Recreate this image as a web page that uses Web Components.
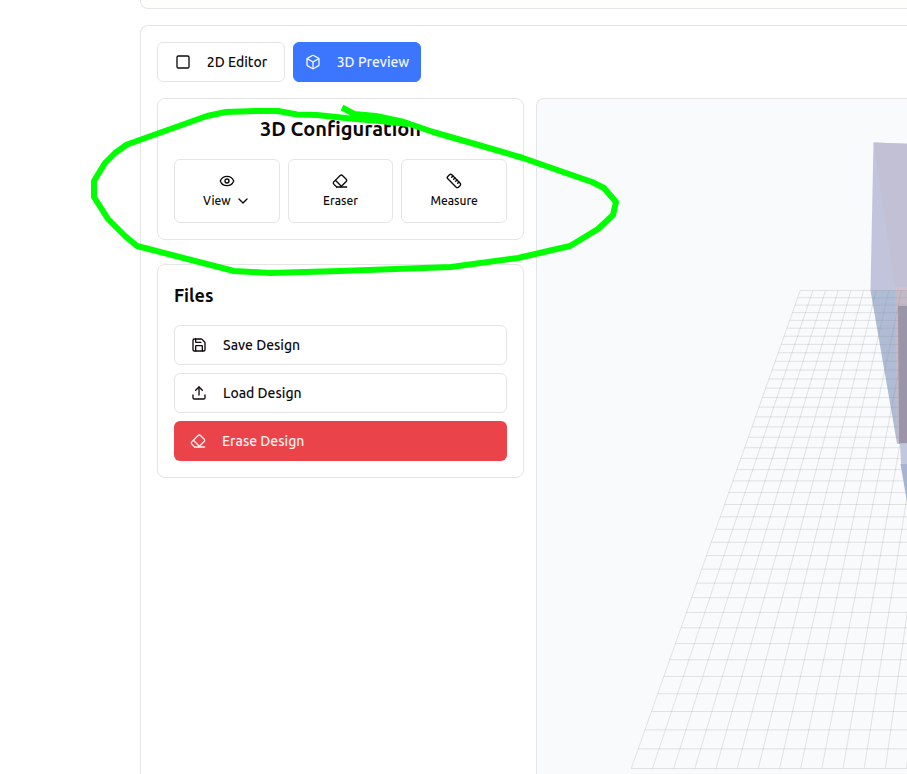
<!DOCTYPE html>
<html lang="en">
<head>
<meta charset="utf-8">
<meta name="viewport" content="width=device-width, initial-scale=1">
<title>Design editor</title>
<style>
  html, body { margin: 0; }
  body {
    background: #fff;
    color: #0c0a09;
    font-family: Ubuntu, "Noto Sans", sans-serif;
    font-size: 14px;
    line-height: 20px;
  }
</style>
</head>
<body>
<design-app></design-app>

<script>
const ICONS = {
  square: '<rect width="18" height="18" x="3" y="3" rx="2"/>',
  box: '<path d="M21 8a2 2 0 0 0-1-1.73l-7-4a2 2 0 0 0-2 0l-7 4A2 2 0 0 0 3 8v8a2 2 0 0 0 1 1.73l7 4a2 2 0 0 0 2 0l7-4A2 2 0 0 0 21 16Z"/><path d="m3.3 7 8.7 5 8.7-5"/><path d="M12 22V12"/>',
  eye: '<path d="M2.06 12.35a1 1 0 0 1 0-.7 10.75 10.75 0 0 1 19.88 0 1 1 0 0 1 0 .7 10.75 10.75 0 0 1-19.88 0"/><circle cx="12" cy="12" r="3"/>',
  eraser: '<path d="m7 21-4.3-4.3c-1-1-1-2.5 0-3.4l9.6-9.6c1-1 2.5-1 3.4 0l5.6 5.6c1 1 1 2.5 0 3.4L13 21"/><path d="M22 21H7"/><path d="m5 11 9 9"/>',
  ruler: '<path d="M21.3 15.3a2.4 2.4 0 0 1 0 3.4l-2.6 2.6a2.4 2.4 0 0 1-3.4 0L2.7 8.7a2.41 2.41 0 0 1 0-3.4l2.6-2.6a2.41 2.41 0 0 1 3.4 0Z"/><path d="m14.5 12.5 2-2"/><path d="m11.5 9.5 2-2"/><path d="m8.5 6.5 2-2"/><path d="m17.5 15.5 2-2"/>',
  save: '<path d="M15.2 3a2 2 0 0 1 1.4.6l3.8 3.8a2 2 0 0 1 .6 1.4V19a2 2 0 0 1-2 2H5a2 2 0 0 1-2-2V5a2 2 0 0 1 2-2z"/><path d="M17 21v-7a1 1 0 0 0-1-1H8a1 1 0 0 0-1 1v7"/><path d="M7 3v4a1 1 0 0 0 1 1h7"/>',
  upload: '<path d="M21 15v4a2 2 0 0 1-2 2H5a2 2 0 0 1-2-2v-4"/><path d="m17 8-5-5-5 5"/><path d="M12 3v12"/>',
  chevron: '<path d="m6 9 6 6 6-6"/>'
};

function define(name, render) {
  customElements.define(name, class extends HTMLElement {
    connectedCallback() {
      if (this.shadowRoot) return;
      this.attachShadow({ mode: 'open' }).innerHTML = render(this);
    }
  });
}

define('ui-icon', el => `
  <style>
    :host { display: block; flex: none; width: 16px; height: 16px; }
    svg { display: block; width: 100%; height: 100%; }
  </style>
  <svg viewBox="0 0 24 24" fill="none" stroke="currentColor" stroke-width="2" stroke-linecap="round" stroke-linejoin="round" aria-hidden="true">${ICONS[el.getAttribute('name')]}</svg>`);

define('ui-button', el => `
  <style>
    :host { display: block; min-width: 0; }
    button {
      box-sizing: border-box;
      display: flex; align-items: center; justify-content: center; gap: 16px;
      width: 100%; height: 40px; margin: 0; padding: 0 16px;
      border: 1px solid #e5e5e5; border-radius: 6px;
      background: #fff; color: inherit;
      font: inherit; font-weight: 500; white-space: nowrap; cursor: pointer;
    }
    :host([variant="tab"]) button { padding: 0 8px; }
    :host([variant="primary"]) button { padding: 0 8px; background: #3c76ff; border-color: #3c76ff; color: #f3f7ff; }
    :host([variant="row"]) button { justify-content: flex-start; }
    :host([variant="danger"]) button { justify-content: flex-start; border: 0; background: #ea444a; color: #fdf0f0; }
    :host([variant="tile"]) button { flex-direction: column; gap: 4px; height: 64px; padding: 0 8px; font-size: 12px; line-height: 16px; }
    .label { display: flex; align-items: center; gap: 4px; }
  </style>
  <button type="button">
    <ui-icon name="${el.getAttribute('icon')}"></ui-icon>
    <span class="label"><slot></slot></span>
  </button>`);

define('ui-card', el => `
  <style>
    :host { display: block; box-sizing: border-box; padding: 16px; border: 1px solid #e5e5e5; border-radius: 8px; background: #fff; }
    h2 { margin: 0 0 16px; font-size: 18px; line-height: 28px; font-weight: 600; }
    :host([centered]) h2 { text-align: center; font-size: 20px; }
  </style>
  <h2>${el.getAttribute('heading')}</h2>
  <slot></slot>`);

/* Floor grid in one-point perspective: 40 x 40 cells between a near and a far edge. */
function floorGrid() {
  const n = 40, horizon = -424;
  const near = { x: 631.3, y: 768.5, step: 21.17 };
  const far = { x: 800.2, y: 290.5, step: 12.67 };
  const a = 1 / (near.y - horizon), b = 1 / (far.y - horizon);
  let d = '';
  for (let i = 0; i <= n; i++) {
    d += `M${near.x + near.step * i} ${near.y}L${far.x + far.step * i} ${far.y}`;
    const y = horizon + 1 / (a + (b - a) * i / n);
    const t = (near.y - y) / (near.y - far.y);
    const x = near.x + (far.x - near.x) * t;
    const w = n * (near.step + (far.step - near.step) * t);
    d += `M${x} ${y}H${x + w}`;
  }
  return d;
}

define('scene-view', () => `
  <style>
    :host { display: block; min-width: 0; min-height: 675px; box-sizing: border-box; overflow: hidden; contain: size; border: 1px solid #e5e5e5; border-right: 0; border-bottom: 0; border-radius: 8px 0 0 0; background: #f9fafc; }
    svg { display: block; width: 100%; height: 100%; }
  </style>
  <svg role="img" aria-label="3D preview of the design">
    <g transform="translate(-537 -99)">
      <path d="M873.5 142.5L1236 156V291H870.5Z" fill="#c1c4da"/>
      <path d="M873.5 142.5L1236 156V291H895.5Z" fill="#c2c0d5"/>
      <path d="M870.5 290.5H1236V443.5H897Z" fill="#afbcd6"/>
      <path d="M895 287H1214V443.5H897Z" fill="#c4bac6"/>
      <path d="M895 287H1214V290.5H895Z" fill="#d2c0cf"/>
      <path d="${floorGrid()}" fill="none" stroke="#8c8c8c" stroke-opacity=".22"/>
      <path d="M898 306H1211V443.5H899Z" fill="#9b95aa"/>
      <path d="M900 443.5H1209V464H901Z" fill="#c2c7dd"/>
      <path d="M900.5 464H1209L1203 502H907Z" fill="#a8b3d3"/>
    </g>
  </svg>`);

define('pen-mark', () => `
  <style>
    :host { position: absolute; top: 0; left: 0; width: 640px; height: 290px; pointer-events: none; }
    svg { display: block; width: 100%; height: 100%; }
  </style>
  <svg viewBox="0 0 640 290" aria-hidden="true">
    <path fill="none" stroke="#00ff00" stroke-width="6" stroke-linejoin="round" d="M342 107.500L354 114L376 116L404 122L433 132L475 144L523 158L563 172L592 182L604 188L616 202L613 215L598 229L570 246L518 258L451 267L340 271L270 273L234 271L137 246L125 236L108 219L94 197V181L105 163L115 153L127 144.500L207 116L226 112L255 111H278L297 114.500L317 115L350 118.500L380 121L408 124"/>
  </svg>`);

define('design-app', () => `
  <style>
    :host { display: flex; flex-direction: column; gap: 16px; position: relative; box-sizing: border-box; min-height: 100vh; padding-left: 140px; }
    header { box-sizing: border-box; height: 9px; border: 1px solid #e5e5e5; border-width: 0 0 1px 1px; border-radius: 0 0 0 8px; background: #fefefc; }
    main { flex: 1; display: flex; flex-direction: column; gap: 16px; padding: 16px 0 0 16px; border: 1px solid #e5e5e5; border-width: 1px 0 0 1px; border-radius: 8px 0 0 0; }
    nav { display: grid; grid-template-columns: 128px 128px; gap: 8px; }
    .work { flex: 1; display: grid; grid-template-columns: 367px minmax(0, 1fr); gap: 12px; }
    aside { display: flex; flex-direction: column; gap: 24px; }
    .tiles { display: grid; grid-template-columns: repeat(3, 1fr); gap: 8px; }
    .rows { display: grid; gap: 8px; }
  </style>
  <header></header>
  <main>
    <nav aria-label="Mode">
      <ui-button variant="tab" icon="square">2D Editor</ui-button>
      <ui-button variant="primary" icon="box">3D Preview</ui-button>
    </nav>
    <div class="work">
      <aside>
        <ui-card heading="3D Configuration" centered>
          <div class="tiles">
            <ui-button variant="tile" icon="eye">View<ui-icon name="chevron"></ui-icon></ui-button>
            <ui-button variant="tile" icon="eraser">Eraser</ui-button>
            <ui-button variant="tile" icon="ruler">Measure</ui-button>
          </div>
        </ui-card>
        <ui-card heading="Files">
          <div class="rows">
            <ui-button variant="row" icon="save">Save Design</ui-button>
            <ui-button variant="row" icon="upload">Load Design</ui-button>
            <ui-button variant="danger" icon="eraser">Erase Design</ui-button>
          </div>
        </ui-card>
      </aside>
      <scene-view></scene-view>
    </div>
  </main>
  <pen-mark></pen-mark>`);
</script>
</body>
</html>
